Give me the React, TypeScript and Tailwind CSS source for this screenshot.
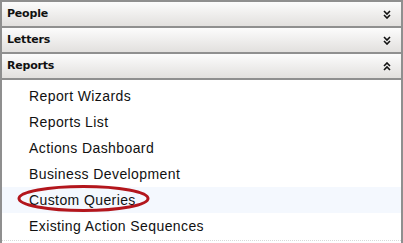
import React from 'react'

function Chevrons({ up }: { up?: boolean }) {
  return (
    <svg width="8" height="9" viewBox="0 0 8 9" className={up ? 'rotate-180' : ''}>
      <path d="M1 1l3 3l3-3M1 5l3 3l3-3" fill="none" stroke="#111" strokeWidth="1.6" />
    </svg>
  )
}

function Header({ label, open }: { label: string; open?: boolean }) {
  return (
    <div className="h-[26px] flex items-center justify-between pl-[5px] pr-[10px] border-b-2 border-[#8f8f8f] bg-gradient-to-b from-[#fcfcfc] to-[#e2e0de]">
      <span className="font-['DejaVu_Sans',sans-serif] font-bold text-[11px] text-[#111] tracking-[-0.2px]">{label}</span>
      <Chevrons up={open} />
    </div>
  )
}

const items = [
  'Report Wizards',
  'Reports List',
  'Actions Dashboard',
  'Business Development',
  'Custom Queries',
  'Existing Action Sequences',
]

export default function App() {
  return (
    <div className="w-[403px] h-[243px] overflow-hidden bg-white">
      <div className="border-2 border-b-0 border-[#8f8f8f] h-[243px] flex flex-col">
        <Header label="People" />
        <Header label="Letters" />
        <Header label="Reports" open />
        <div className="pt-[3px] flex-1">
          {items.map(item => (
            <div
              key={item}
              className={`relative h-[26px] flex items-center pl-[27px] font-['Liberation_Sans',Arial,sans-serif] text-[14px] tracking-[0.4px] text-[#111] ${
                item === 'Custom Queries' ? 'bg-[#f4f8fe]' : ''
              }`}
            >
              {item}
              {item === 'Custom Queries' && (
                <svg className="absolute left-[14px] top-[-2px]" width="140" height="30" viewBox="0 0 140 30">
                  <ellipse cx="67.5" cy="13.5" rx="64.5" ry="12" fill="none" stroke="#b3161c" strokeWidth="3" />
                </svg>
              )}
            </div>
          ))}
          <div className="border-t border-dotted border-[#d8d8d8] mt-[1px]" />
        </div>
      </div>
    </div>
  )
}
